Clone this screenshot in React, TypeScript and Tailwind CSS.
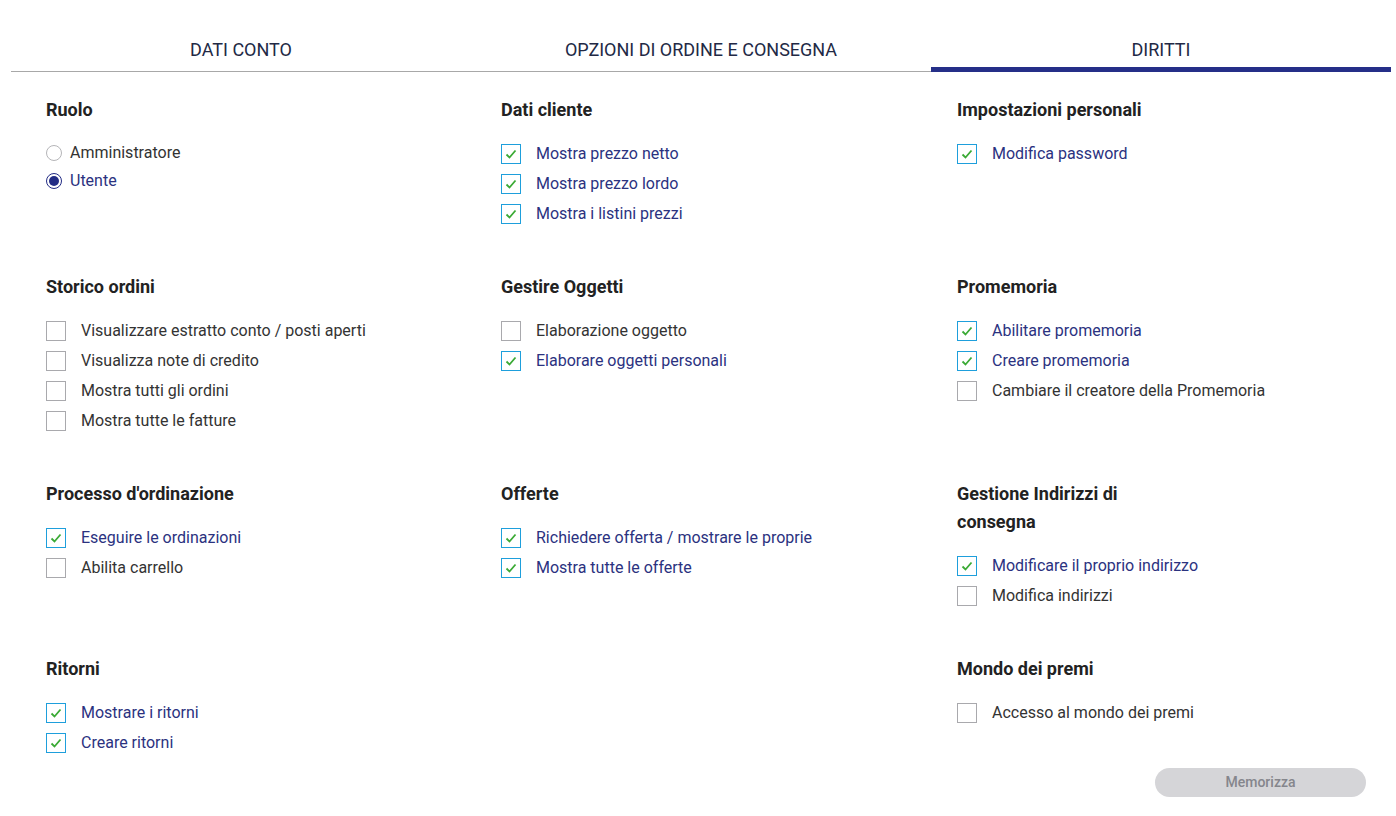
import React, { useState } from 'react';

type Item = { label: string; checked: boolean };
type Section = { title: string; items?: Item[]; radio?: string[] };

const tabs = ['DATI CONTO', 'OPZIONI DI ORDINE E CONSEGNA', 'DIRITTI'];

const rows: (Section | null)[][] = [
  [
    { title: 'Ruolo', radio: ['Amministratore', 'Utente'] },
    {
      title: 'Dati cliente',
      items: [
        { label: 'Mostra prezzo netto', checked: true },
        { label: 'Mostra prezzo lordo', checked: true },
        { label: 'Mostra i listini prezzi', checked: true },
      ],
    },
    { title: 'Impostazioni personali', items: [{ label: 'Modifica password', checked: true }] },
  ],
  [
    {
      title: 'Storico ordini',
      items: [
        { label: 'Visualizzare estratto conto / posti aperti', checked: false },
        { label: 'Visualizza note di credito', checked: false },
        { label: 'Mostra tutti gli ordini', checked: false },
        { label: 'Mostra tutte le fatture', checked: false },
      ],
    },
    {
      title: 'Gestire Oggetti',
      items: [
        { label: 'Elaborazione oggetto', checked: false },
        { label: 'Elaborare oggetti personali', checked: true },
      ],
    },
    {
      title: 'Promemoria',
      items: [
        { label: 'Abilitare promemoria', checked: true },
        { label: 'Creare promemoria', checked: true },
        { label: 'Cambiare il creatore della Promemoria', checked: false },
      ],
    },
  ],
  [
    {
      title: "Processo d'ordinazione",
      items: [
        { label: 'Eseguire le ordinazioni', checked: true },
        { label: 'Abilita carrello', checked: false },
      ],
    },
    {
      title: 'Offerte',
      items: [
        { label: 'Richiedere offerta / mostrare le proprie', checked: true },
        { label: 'Mostra tutte le offerte', checked: true },
      ],
    },
    {
      title: 'Gestione Indirizzi di consegna',
      items: [
        { label: 'Modificare il proprio indirizzo', checked: true },
        { label: 'Modifica indirizzi', checked: false },
      ],
    },
  ],
  [
    {
      title: 'Ritorni',
      items: [
        { label: 'Mostrare i ritorni', checked: true },
        { label: 'Creare ritorni', checked: true },
      ],
    },
    null,
    { title: 'Mondo dei premi', items: [{ label: 'Accesso al mondo dei premi', checked: false }] },
  ],
];

const CheckRow: React.FC<{ item: Item }> = ({ item }) => {
  const [on, setOn] = useState(item.checked);
  return (
    <label className="flex h-[30px] cursor-pointer items-center gap-[15px]">
      <span
        onClick={() => setOn(!on)}
        className={`flex h-[20px] w-[20px] shrink-0 items-center justify-center border bg-white ${
          on ? 'border-[#1e9fdc]' : 'border-[#a9a9ad]'
        }`}
      >
        {on && (
          <svg width="14" height="14" viewBox="0 0 14 14" fill="none">
            <path d="M2.5 7.5 L5.5 10.5 L11.5 3.5" stroke="#3aaa35" strokeWidth="1.8" />
          </svg>
        )}
      </span>
      <span className={`text-[16px] ${on ? 'text-[#2b327f]' : 'text-[#333333]'}`}>{item.label}</span>
    </label>
  );
};

const RadioGroup: React.FC<{ options: string[] }> = ({ options }) => {
  const [value, setValue] = useState('Utente');
  return (
    <div className="mt-[15px]">
      {options.map((o) => (
        <label key={o} className="flex h-[28px] cursor-pointer items-center gap-[8px]" onClick={() => setValue(o)}>
          <span
            className={`flex h-[16px] w-[16px] items-center justify-center rounded-full border ${
              value === o ? 'border-[1.5px] border-[#232c85]' : 'border-[#b5b5b8]'
            }`}
          >
            {value === o && <span className="h-[10px] w-[10px] rounded-full bg-[#232c85]" />}
          </span>
          <span className={`text-[16px] ${value === o ? 'text-[#2b327f]' : 'text-[#333333]'}`}>{o}</span>
        </label>
      ))}
    </div>
  );
};

const SectionBlock: React.FC<{ section: Section | null }> = ({ section }) => {
  if (!section) return <div />;
  return (
    <div>
      <h3 className="max-w-[200px] text-[18px] font-bold leading-[28px] text-[#222222]">{section.title}</h3>
      {section.radio && <RadioGroup options={section.radio} />}
      {section.items && (
        <div className="mt-[15px]">
          {section.items.map((it) => (
            <CheckRow key={it.label} item={it} />
          ))}
        </div>
      )}
    </div>
  );
};

export default function App() {
  const [active, setActive] = useState(2);
  return (
    <div className="min-h-screen bg-white font-['Roboto','Liberation_Sans',sans-serif]">
      <div className="ml-[11px] mr-[5px] flex pt-[28px]">
        {tabs.map((t, i) => (
          <button
            key={t}
            onClick={() => setActive(i)}
            className="relative flex h-[44px] flex-1 items-center justify-center border-b border-[#a8a8a8] pb-[1px] text-[18px] text-[#222945]"
          >
            {t}
            {active === i && <span className="absolute bottom-[-1px] left-0 right-0 h-[5px] bg-[#252f88]" />}
          </button>
        ))}
      </div>

      <div className="grid grid-cols-[455px_456px_1fr] gap-y-[44px] pl-[46px] pt-[24px]">
        {rows.flat().map((s, i) => (
          <SectionBlock key={i} section={s} />
        ))}
      </div>

      <div className="flex justify-end pr-[30px] pt-[10px]">
        <button className="h-[29px] w-[211px] rounded-full bg-[#d5d5d8] text-[14px] font-medium text-[#85868c]">
          Memorizza
        </button>
      </div>
    </div>
  );
}
